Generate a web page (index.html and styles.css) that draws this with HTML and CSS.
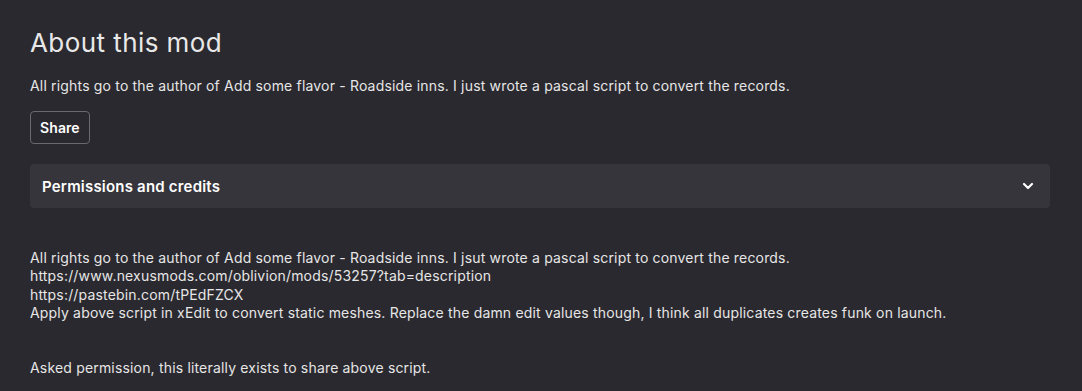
FILE: index.html
```html
<!DOCTYPE html>
<html>
<head>
<meta charset="utf-8">
<link rel="stylesheet" href="styles.css">
</head>
<body>
<main class="page">
  <h1 class="title">About this mod</h1>
  <p class="summary">All rights go to the author of Add some flavor - Roadside inns. I just wrote a pascal script to convert the records.</p>
  <button class="share">Share</button>
  <div class="accordion">
    <span class="acc-title">Permissions and credits</span>
    <svg class="chevron" width="12" height="8" viewBox="0 0 12 8"><path d="M2 2l4 4 4-4" fill="none" stroke="#fff" stroke-width="2.2" stroke-linecap="round" stroke-linejoin="round"/></svg>
  </div>
  <div class="desc">
    All rights go to the author of Add some flavor - Roadside inns. I jsut wrote a pascal script to convert the records.<br>
    https://www.nexusmods.com/oblivion/mods/53257?tab=description<br>
    https://pastebin.com/tPEdFZCX<br>
    Apply above script in xEdit to convert static meshes. Replace the damn edit values though, I think all duplicates creates funk on launch.<br>
    <br>
    <br>
    Asked permission, this literally exists to share above script.
  </div>
</main>
</body>
</html>
```
FILE: styles.css
```css
html, body {
  margin: 0;
  padding: 0;
  background: #2a292f;
}
.page {
  font-family: Inter, "Noto Sans", sans-serif;
  color: #e6e6e6;
  padding: 27px 32px 0 30px;
}
.title {
  margin: 0;
  font-size: 26px;
  font-weight: 400;
  line-height: 32px;
  letter-spacing: 0.43px;
  color: #e8e8e8;
}
.summary {
  margin: 17px 0 0;
  font-size: 14px;
  line-height: 20px;
  letter-spacing: 0.175px;
}
.share {
  margin-top: 15px;
  display: block;
  height: 33px;
  padding: 0 9px;
  background: transparent;
  border: 1px solid #6a6970;
  border-radius: 4px;
  color: #fff;
  font-family: Inter, sans-serif;
  font-weight: 600;
  font-size: 14px;
  letter-spacing: 0.1px;
}
.accordion {
  margin-top: 20px;
  height: 44px;
  background: #36353b;
  border-radius: 4px;
  display: flex;
  align-items: center;
  justify-content: space-between;
  padding: 0 16px 0 12px;
}
.acc-title {
  font-weight: 600;
  font-size: 15px;
  letter-spacing: 0.2px;
  color: #fff;
}
.desc {
  margin-top: 41px;
  font-size: 14px;
  line-height: 18.3px;
  letter-spacing: 0.175px;
}
```
